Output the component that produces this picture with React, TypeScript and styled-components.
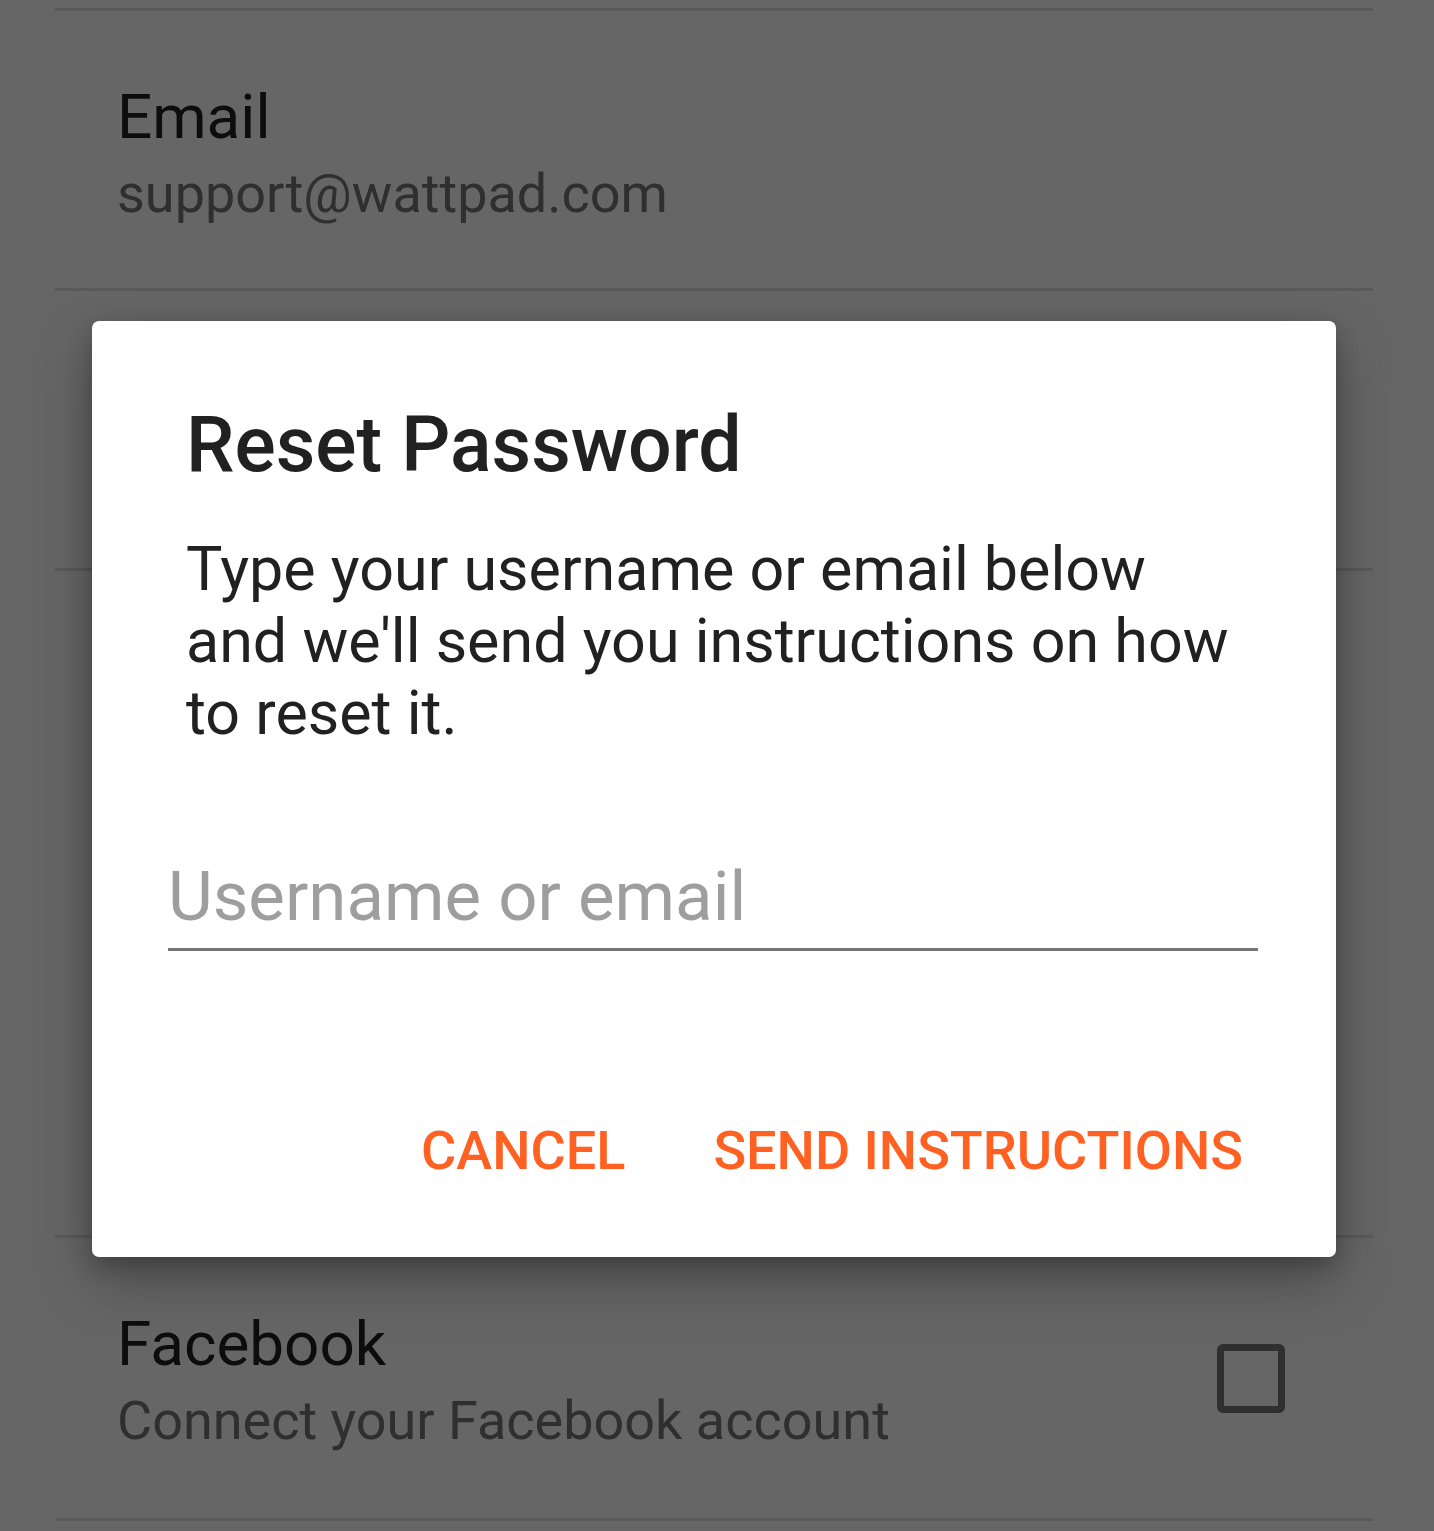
import React from 'react';
import styled, { createGlobalStyle } from 'styled-components';

const GlobalStyle = createGlobalStyle`
    html, body {
        margin: 0;
        padding: 0;
        background: #ffffff;
        overflow: hidden;
    }
    body {
        font-family: Roboto, 'Noto Sans', 'Liberation Sans', sans-serif;
    }
`;

const Page = styled.div`
    position: relative;
    width: 1434px;
    height: 1531px;
    overflow: hidden;
    background: #ffffff;
`;

const List = styled.div`
    display: flex;
    flex-direction: column;
    padding-top: 8px;
`;

const Row = styled.div<{ rowHeight: number }>`
    display: flex;
    align-items: center;
    height: ${props => props.rowHeight}px;
    margin: 0 61px 0 55px;
    padding: 0 88px 0 62px;
    border-top: 3px solid #e0e0e0;

    &:last-child {
        border-bottom: 3px solid #e0e0e0;
    }
`;

const RowText = styled.div`
    flex: 1;
    display: flex;
    flex-direction: column;
    align-self: flex-start;
    padding-top: 69px;
`;

const RowTitle = styled.div`
    font-size: 62px;
    line-height: 74px;
    color: #212121;
`;

const RowSubtitle = styled.div`
    margin-top: 3px;
    font-size: 54px;
    line-height: 74px;
    color: #757575;
`;

const CheckBox = styled.div`
    width: 54px;
    height: 55px;
    border: 7px solid #757575;
    border-radius: 6px;
    box-sizing: content-box;
`;

const Scrim = styled.div`
    position: absolute;
    inset: 0;
    background: rgba(0, 0, 0, 0.6);
    display: flex;
    align-items: flex-start;
    padding: 321px 98px 0 92px;
`;

const Dialog = styled.div`
    flex: 1;
    background: #ffffff;
    border-radius: 7px;
    box-shadow: 0 24px 60px rgba(0, 0, 0, 0.28), 0 8px 22px rgba(0, 0, 0, 0.22);
    padding: 77px 78px 74px 94px;
    display: flex;
    flex-direction: column;
`;

const DialogTitle = styled.div`
    font-size: 77px;
    line-height: 95px;
    font-weight: 500;
    color: #212121;
`;

const DialogBody = styled.div`
    margin-top: 40px;
    font-size: 61px;
    line-height: 72px;
    color: #212121;
    padding-right: 23px;
`;

const Field = styled.div`
    margin: 106px 0 0 -18px;
    padding-bottom: 9px;
    border-bottom: 3px solid #757575;
    font-size: 69px;
    line-height: 84px;
    color: #9e9e9e;
`;

const Actions = styled.div`
    margin-top: 168px;
    display: flex;
    justify-content: flex-end;
    gap: 88px;
    padding-right: 15px;
`;

const ActionButton = styled.div`
    font-size: 54px;
    line-height: 64px;
    font-weight: 500;
    color: #ff6122;
    text-transform: uppercase;
`;

export default function App() {
    return (
        <Page>
            <GlobalStyle />
            <List>
                <Row rowHeight={277}>
                    <RowText>
                        <RowTitle>Email</RowTitle>
                        <RowSubtitle>support@wattpad.com</RowSubtitle>
                    </RowText>
                </Row>
                <Row rowHeight={277}>
                    <RowText>
                        <RowTitle>Password</RowTitle>
                        <RowSubtitle>Change your password</RowSubtitle>
                    </RowText>
                </Row>
                <Row rowHeight={664}>
                    <RowText>
                        <RowTitle>Birthday</RowTitle>
                        <RowSubtitle>Set your birthday</RowSubtitle>
                    </RowText>
                </Row>
                <Row rowHeight={280}>
                    <RowText>
                        <RowTitle>Facebook</RowTitle>
                        <RowSubtitle>Connect your Facebook account</RowSubtitle>
                    </RowText>
                    <CheckBox />
                </Row>
            </List>
            <Scrim>
                <Dialog>
                    <DialogTitle>Reset Password</DialogTitle>
                    <DialogBody>
                        Type your username or email below and we'll send you instructions on how to reset it.
                    </DialogBody>
                    <Field>Username or email</Field>
                    <Actions>
                        <ActionButton>Cancel</ActionButton>
                        <ActionButton>Send Instructions</ActionButton>
                    </Actions>
                </Dialog>
            </Scrim>
        </Page>
    );
}
